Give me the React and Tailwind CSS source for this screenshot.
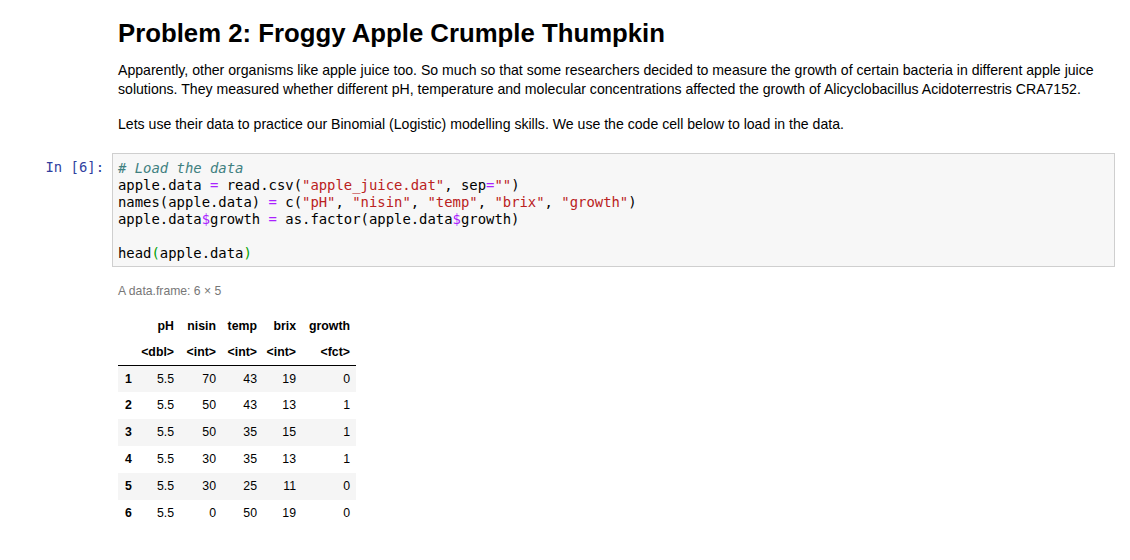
const rows = [
  [1, '5.5', 70, 43, 19, 0],
  [2, '5.5', 50, 43, 13, 1],
  [3, '5.5', 50, 35, 15, 1],
  [4, '5.5', 30, 35, 13, 1],
  [5, '5.5', 30, 25, 11, 0],
  [6, '5.5', 0, 50, 19, 0],
];

const S = ({ children }) => <span className="text-[#ba2121]">{children}</span>;
const Op = ({ children }) => <span className="text-[#aa22ff]">{children}</span>;

export default function App() {
  return (
    <div className="bg-white min-h-screen text-black font-['Liberation_Sans',Arial,sans-serif] pt-[17px]">
      {/* markdown cell */}
      <div className="pl-[112px] pr-[15px]">
        <div className="px-[6px]">
          <h2 className="text-[25.75px] leading-[32px] font-bold">Problem 2: Froggy Apple Crumple Thumpkin</h2>
          <p className="mt-[12px] text-[14.1px] leading-[19px]">
            Apparently, other organisms like apple juice too. So much so that some researchers decided to measure the growth of certain bacteria in different apple juice solutions. They measured whether different pH, temperature and molecular concentrations affected the growth of Alicyclobacillus Acidoterrestris CRA7152.
          </p>
          <p className="mt-[16px] text-[14.1px] leading-[19px]">
            Lets use their data to practice our Binomial (Logistic) modelling skills. We use the code cell below to load in the data.
          </p>
        </div>
      </div>

      {/* code cell */}
      <div className="flex mt-[19px]">
        <div className="w-[112px] shrink-0 pr-[8px] pt-[6px] text-right font-['DejaVu_Sans_Mono',monospace] text-[13.9px] leading-[17px] text-[#303f9f]">
          In [6]:
        </div>
        <div className="w-[1003px] border border-[#cfcfcf] bg-[#f7f7f7] px-[5px] pt-[6px] pb-[4px] font-['DejaVu_Sans_Mono',monospace] text-[13.9px] leading-[17px] whitespace-pre">
          <div className="italic text-[#408080]"># Load the data</div>
          <div>apple.data <Op>=</Op> read.csv(<S>"apple_juice.dat"</S>, sep<Op>=</Op><S>""</S>)</div>
          <div>names(apple.data) <Op>=</Op> c(<S>"pH"</S>, <S>"nisin"</S>, <S>"temp"</S>, <S>"brix"</S>, <S>"growth"</S>)</div>
          <div>apple.data<Op>$</Op>growth <Op>=</Op> as.factor(apple.data<Op>$</Op>growth)</div>
          <div>&nbsp;</div>
          <div>head<span className="text-[#00a000]">(</span>apple.data<span className="text-[#00a000]">)</span></div>
        </div>
      </div>

      {/* output */}
      <div className="pl-[118px] mt-[17px]">
        <div className="text-[12.2px] leading-[14px] text-[#777777]">A data.frame: 6 × 5</div>
        <table className="mt-[15px] table-fixed border-collapse text-[12.3px] w-[238px]">
          <thead>
            <tr className="h-[26px]">
              <th className="w-[20px]"></th>
              <th className="w-[42px] text-right pr-[6px] font-bold">pH</th>
              <th className="w-[42px] text-right pr-[6px] font-bold">nisin</th>
              <th className="w-[41px] text-right pr-[6px] font-bold">temp</th>
              <th className="w-[39px] text-right pr-[6px] font-bold">brix</th>
              <th className="w-[54px] text-right pr-[6px] font-bold">growth</th>
            </tr>
            <tr className="h-[26px] border-b border-black">
              <th></th>
              <th className="text-right pr-[6px] font-bold">&lt;dbl&gt;</th>
              <th className="text-right pr-[6px] font-bold">&lt;int&gt;</th>
              <th className="text-right pr-[6px] font-bold">&lt;int&gt;</th>
              <th className="text-right pr-[6px] font-bold">&lt;int&gt;</th>
              <th className="text-right pr-[6px] font-bold">&lt;fct&gt;</th>
            </tr>
          </thead>
          <tbody>
            {rows.map((r, i) => (
              <tr key={r[0]} className={`h-[27px] ${i % 2 === 0 ? 'bg-[#f5f5f5]' : 'bg-white'}`}>
                <th className="text-left pl-[7px] font-bold">{r[0]}</th>
                {r.slice(1).map((v, j) => (
                  <td key={j} className="text-right pr-[6px]">{v}</td>
                ))}
              </tr>
            ))}
          </tbody>
        </table>
      </div>
    </div>
  );
}
